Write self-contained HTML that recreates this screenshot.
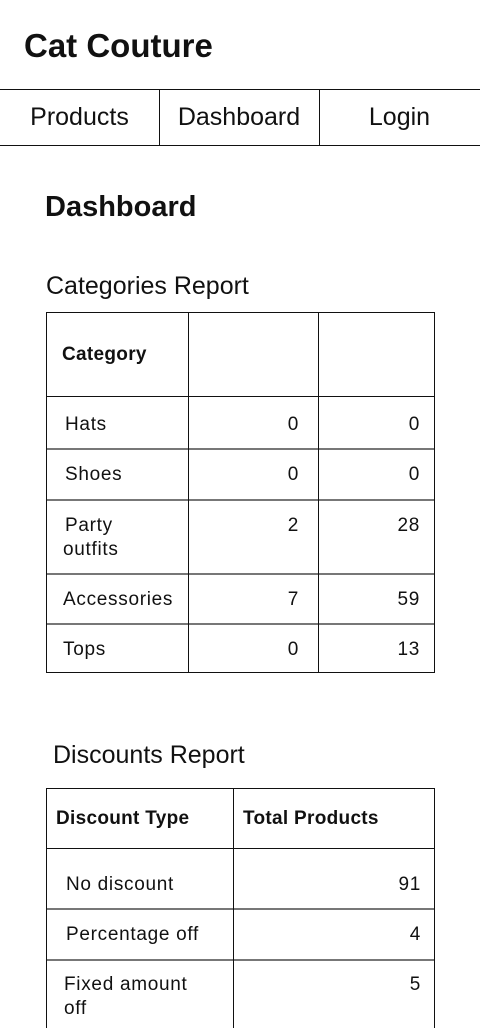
<!DOCTYPE html>
<html><head><meta charset="utf-8"><style>
*{margin:0;padding:0;box-sizing:border-box}
body{width:480px;height:1024px;overflow:hidden;background:#fff;position:relative;font-family:"Liberation Sans",sans-serif;color:#111}
.a{position:absolute;white-space:nowrap}
.h{position:absolute;height:1px;background:#111}
.g{position:absolute;height:2px;background:#777}
.v{position:absolute;width:1px;background:#111}
.c{font-size:19px;letter-spacing:0.7px;margin-top:2px}
.b{font-size:19px;font-weight:bold;letter-spacing:0.3px;margin-top:1px}
.r{text-align:right}
</style></head><body>
<div class="a" style="left:24px;top:27px;font-size:33px;font-weight:bold">Cat Couture</div>
<div class="h" style="left:0;top:89px;width:480px"></div>
<div class="h" style="left:0;top:145px;width:480px"></div>
<div class="v" style="left:159px;top:89px;height:56px"></div>
<div class="v" style="left:319px;top:89px;height:56px"></div>
<div class="a" style="left:0;width:159px;top:103px;font-size:25px;text-align:center">Products</div>
<div class="a" style="left:159px;width:160px;top:103px;font-size:25px;text-align:center">Dashboard</div>
<div class="a" style="left:319px;width:161px;top:103px;font-size:25px;text-align:center">Login</div>

<div class="a" style="left:45px;top:191px;font-size:29px;font-weight:bold">Dashboard</div>
<div class="a" style="left:46px;top:272px;font-size:25px">Categories Report</div>

<div class="h" style="left:46px;top:312px;width:389px"></div>
<div class="h" style="left:46px;top:396px;width:389px"></div>
<div class="g" style="left:46px;top:448px;width:389px"></div>
<div class="g" style="left:46px;top:499px;width:389px"></div>
<div class="g" style="left:46px;top:573px;width:389px"></div>
<div class="g" style="left:46px;top:623px;width:389px"></div>
<div class="h" style="left:46px;top:672px;width:389px"></div>
<div class="v" style="left:46px;top:312px;height:361px"></div>
<div class="v" style="left:188px;top:312px;height:361px"></div>
<div class="v" style="left:318px;top:312px;height:361px"></div>
<div class="v" style="left:434px;top:312px;height:361px"></div>
<div class="a b" style="left:62px;top:343px">Category</div>
<div class="a c" style="left:65px;top:412px">Hats</div>
<div class="a c" style="left:65px;top:462px">Shoes</div>
<div class="a c" style="left:65px;top:513px">Party</div>
<div class="a c" style="left:63px;top:537px">outfits</div>
<div class="a c" style="left:63px;top:587px">Accessories</div>
<div class="a c" style="left:63px;top:637px">Tops</div>
<div class="a c r" style="left:200px;width:99px;top:412px">0</div>
<div class="a c r" style="left:200px;width:99px;top:462px">0</div>
<div class="a c r" style="left:200px;width:99px;top:513px">2</div>
<div class="a c r" style="left:200px;width:99px;top:587px">7</div>
<div class="a c r" style="left:200px;width:99px;top:637px">0</div>
<div class="a c r" style="left:320px;width:100px;top:412px">0</div>
<div class="a c r" style="left:320px;width:100px;top:462px">0</div>
<div class="a c r" style="left:320px;width:100px;top:513px">28</div>
<div class="a c r" style="left:320px;width:100px;top:587px">59</div>
<div class="a c r" style="left:320px;width:100px;top:637px">13</div>

<div class="a" style="left:53px;top:741px;font-size:25px">Discounts Report</div>

<div class="h" style="left:46px;top:788px;width:389px"></div>
<div class="h" style="left:46px;top:848px;width:389px"></div>
<div class="g" style="left:46px;top:908px;width:389px"></div>
<div class="g" style="left:46px;top:959px;width:389px"></div>
<div class="v" style="left:46px;top:788px;height:240px"></div>
<div class="v" style="left:233px;top:788px;height:240px"></div>
<div class="v" style="left:434px;top:788px;height:240px"></div>
<div class="a b" style="left:56px;top:807px">Discount Type</div>
<div class="a b" style="left:243px;top:807px">Total Products</div>
<div class="a c" style="left:66px;top:872px">No discount</div>
<div class="a c" style="left:66px;top:922px">Percentage off</div>
<div class="a c" style="left:64px;top:972px">Fixed amount</div>
<div class="a c" style="left:64px;top:996px">off</div>
<div class="a c r" style="left:240px;width:181px;top:872px">91</div>
<div class="a c r" style="left:240px;width:181px;top:922px">4</div>
<div class="a c r" style="left:240px;width:181px;top:972px">5</div>
</body></html>
